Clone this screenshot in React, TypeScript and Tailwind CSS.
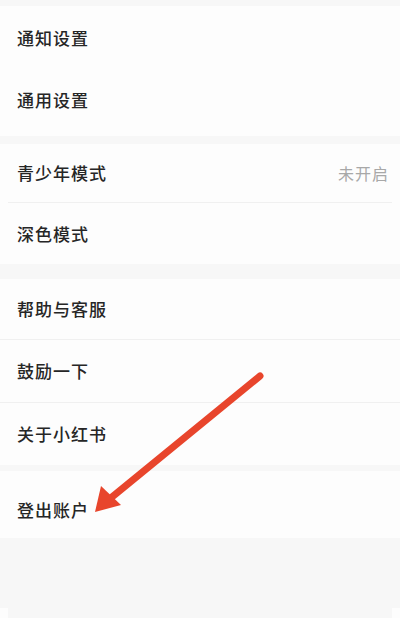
const font = { fontFamily: '"Noto Sans CJK SC", "Noto Sans", sans-serif' };

function Row({
  label,
  value,
  h,
  divider,
}: {
  label: string;
  value?: string;
  h: string;
  divider?: "inset" | "full";
}) {
  return (
    <div className="relative">
      <div className={`flex items-center justify-between pl-[17px] pr-[11px] ${h}`}>
        <span className="text-[17px] font-medium tracking-[1px] text-[#262626]">{label}</span>
        {value && <span className="text-[16px] tracking-[1px] text-[#a8a8a8]">{value}</span>}
      </div>
      {divider === "inset" && <div className="mx-2 h-px bg-[#f0f0f0]" />}
      {divider === "full" && <div className="h-px bg-[#f0f0f0]" />}
    </div>
  );
}

export default function App() {
  return (
    <div className="relative h-[618px] w-[400px] overflow-hidden bg-[#f7f7f7]" style={font}>
      <div className="h-[6px]" />
      <div className="bg-[#fdfdfd]">
        <Row label="通知设置" h="h-[64px]" />
        <Row label="通用设置" h="h-[66px] pb-[6px]" />
      </div>
      <div className="h-[8px]" />
      <div className="bg-[#fdfdfd]">
        <Row label="青少年模式" value="未开启" h="h-[58px]" divider="inset" />
        <Row label="深色模式" h="h-[61px]" />
      </div>
      <div className="h-[15px]" />
      <div className="bg-[#fdfdfd]">
        <Row label="帮助与客服" h="h-[60px]" divider="full" />
        <Row label="鼓励一下" h="h-[62px]" divider="full" />
        <Row label="关于小红书" h="h-[62px]" />
      </div>
      <div className="h-[6px]" />
      <div className="bg-[#fdfdfd]">
        <div className="flex h-[67px] items-center px-[17px] pt-[10px]">
          <span className="text-[17px] font-medium tracking-[1px] text-[#262626]">登出账户</span>
        </div>
      </div>

      <div className="absolute bottom-0 left-0 flex h-[10px] w-full justify-between">
        <div className="w-2 bg-[#fdfdfd]" />
        <div className="w-2 bg-[#fdfdfd]" />
      </div>

      <svg className="absolute left-0 top-0" width="400" height="618" viewBox="0 0 400 618">
        <line x1="260" y1="376" x2="112" y2="497" stroke="#e8452c" strokeWidth="7" strokeLinecap="round" />
        <polygon points="95,512 101,486 121,505" fill="#e8452c" />
      </svg>
    </div>
  );
}
